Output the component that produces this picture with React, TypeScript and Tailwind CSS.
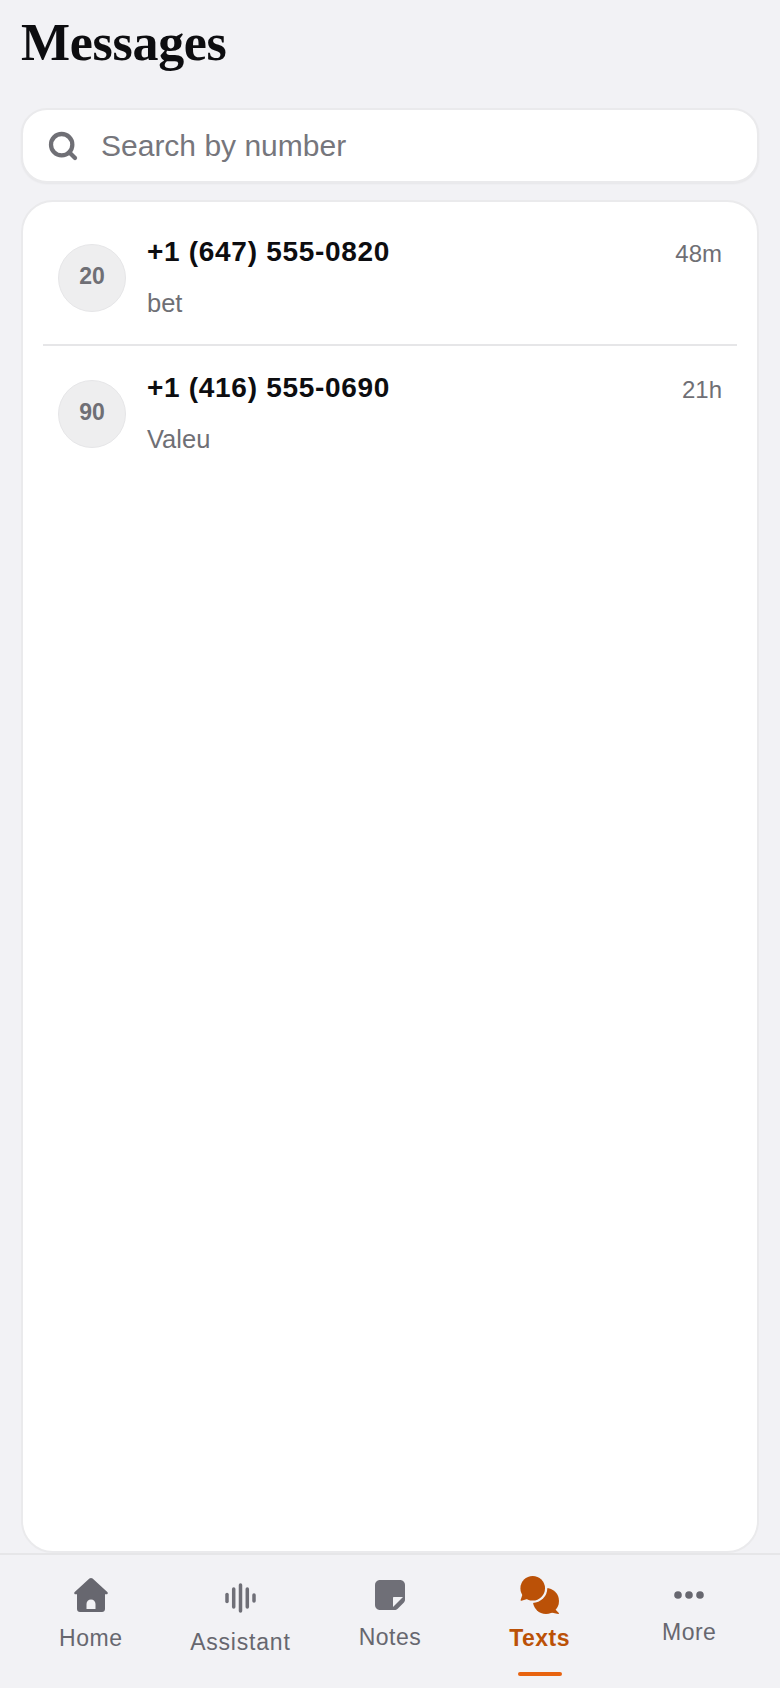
import React from 'react';
import { Search } from 'lucide-react';

const sans = "font-['Liberation_Sans',Arial,sans-serif]";

const threads = [
  { id: '20', phone: '+1 (647) 555-0820', preview: 'bet', time: '48m' },
  { id: '90', phone: '+1 (416) 555-0690', preview: 'Valeu', time: '21h' },
];

const HomeIcon = () => (
  <svg width="34" height="34" viewBox="0 0 34 34" fill="#67676f">
    <path
      fillRule="evenodd"
      d="M17 0c.6 0 1.100.2 1.600.6l14.700 13.300c.9.800.5 2.300-.9 2.300H31v14.800c0 1.700-1.300 3-3 3H6c-1.700 0-3-1.300-3-3V16.200H1.600c-1.400 0-1.800-1.500-.9-2.300L15.400.6C15.900.2 16.400 0 17 0zM17 21.500c-2.500 0-4.500 2-4.500 4.500v5h9v-5c0-2.500-2-4.500-4.500-4.500z"
    />
  </svg>
);

const WaveIcon = () => (
  <svg width="31" height="30" viewBox="0 0 31 30" stroke="#6f6f77" strokeLinecap="round" fill="none" strokeWidth="3.500">
    <path d="M2 11.500v7" />
    <path d="M8.700 6v18" />
    <path d="M15.500 2v26" />
    <path d="M22.300 6v18" />
    <path d="M29 12v6" />
  </svg>
);

const NoteIcon = () => (
  <svg width="30" height="30" viewBox="0 0 30 30">
    <path d="M5 0h20c2.800 0 5 2.200 5 5v14.500c0 1.200-.5 2.300-1.300 3.200l-6 6c-.9.800-2 1.300-3.200 1.300H5c-2.800 0-5-2.200-5-5V5c0-2.800 2.200-5 5-5z" fill="#6f6f77" />
    <path d="M18 27V18c0-.6.400-1 1-1h9z" fill="#f2f2f5" />
  </svg>
);

const ChatIcon = () => (
  <svg width="39" height="38" viewBox="0 0 39 38" fill="#bb5107">
    <circle cx="26" cy="25" r="13" />
    <path d="M32 30l6.800 7c.4.500 0 1-.6.900L29 36z" />
    <circle cx="12.700" cy="12.300" r="14.600" fill="#f2f2f5" />
    <circle cx="12.700" cy="12.300" r="12.300" />
    <path d="M3 17L.6 24c-.2.600.2 1 .8.800L9 22.500z" />
  </svg>
);

const MoreIcon = () => (
  <svg width="30" height="8" viewBox="0 0 30 8" fill="#67676f">
    <circle cx="4" cy="4" r="3.800" />
    <circle cx="15" cy="4" r="3.800" />
    <circle cx="26" cy="4" r="3.800" />
  </svg>
);

const Thread = ({ id, phone, preview, time }: { id: string; phone: string; preview: string; time: string }) => (
  <div className="flex h-[134px] gap-[21px] px-[15px]">
    <div className="mt-[34px] flex h-[68px] w-[68px] shrink-0 items-center justify-center rounded-full border border-[#e6e6e8] bg-[#eeeeef] pb-[3px] text-[23px] font-bold text-[#6f6f75]">
      {id}
    </div>
    <div className="min-w-0 flex-1 pt-[24px]">
      <div className="flex items-start justify-between">
        <span className="text-[28px] leading-[36px] font-bold tracking-[0.7px] text-[#0d0d10]">{phone}</span>
        <span className="pt-[5px] text-[24px] leading-[30px] text-[#6f6f75]">{time}</span>
      </div>
      <div className="mt-[17px] text-[25.500px] leading-[32px] text-[#6f6f75]">{preview}</div>
    </div>
  </div>
);

export default function App() {
  return (
    <div className={`flex h-[1688px] w-[780px] flex-col overflow-hidden bg-[#f2f2f5] ${sans}`}>
      <div className="flex min-h-0 flex-1 flex-col px-[21px]">
        <h1 className="pt-[13px] font-['Liberation_Serif',serif] text-[52px] leading-[60px] font-bold tracking-[-0.3px] text-[#0d0d10]">
          Messages
        </h1>
        <div className="mt-[35px] flex h-[75px] items-center gap-[22px] rounded-[26px] border-2 border-[#eaeaec] bg-white px-[24px] shadow-[0_1px_2px_rgba(0,0,0,0.05)]">
          <Search size={32} strokeWidth={3.2} color="#6f6f75" />
          <span className="text-[30px] leading-[36px] text-[#76767c]">Search by number</span>
        </div>
        <div className="mt-[17px] flex-1 rounded-[32px] border-2 border-[#eaeaec] bg-white px-[20px] pt-[8px]">
          <Thread {...threads[0]} />
          <div className="h-[2px] bg-[#e6e6e8]" />
          <Thread {...threads[1]} />
        </div>
      </div>
      <nav className="grid h-[135px] shrink-0 grid-cols-5 border-t-2 border-[#e6e6e8] bg-[#f2f2f5] px-[16px] text-[#67676f]">
        <div className="flex flex-col items-center pt-[23px]">
          <HomeIcon />
          <span className="mt-[11px] text-[23px] leading-[30px] tracking-[0.5px]">Home</span>
        </div>
        <div className="flex flex-col items-center pt-[28px]">
          <WaveIcon />
          <span className="mt-[14px] text-[23px] leading-[30px] tracking-[0.8px]">Assistant</span>
        </div>
        <div className="flex flex-col items-center pt-[25px]">
          <NoteIcon />
          <span className="mt-[12px] text-[23px] leading-[30px] tracking-[0.5px]">Notes</span>
        </div>
        <div className="relative flex flex-col items-center pt-[21px]">
          <ChatIcon />
          <span className="mt-[9px] text-[23px] leading-[30px] font-bold tracking-[0.5px] text-[#bb5107]">Texts</span>
          <div className="absolute bottom-[12px] h-[4px] w-[44px] rounded-full bg-[#e8630f]" />
        </div>
        <div className="flex flex-col items-center pt-[36px]">
          <MoreIcon />
          <span className="mt-[18px] text-[23px] leading-[30px] tracking-[0.5px]">More</span>
        </div>
      </nav>
    </div>
  );
}
